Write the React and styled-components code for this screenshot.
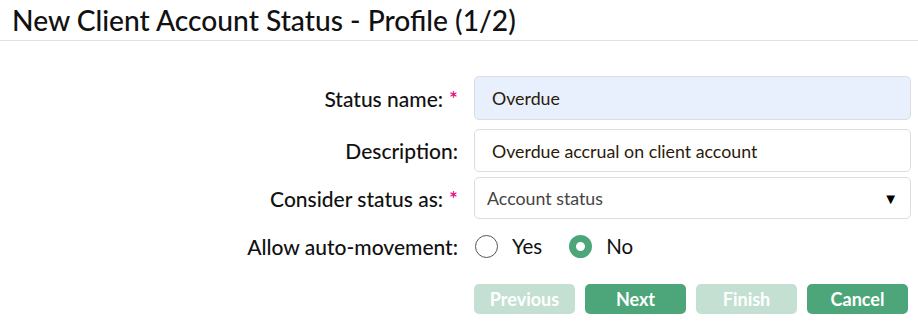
import React from 'react'
import styled, { createGlobalStyle } from 'styled-components'

const Global = createGlobalStyle`
  body {
    margin: 0;
    background: #fff;
    font-family: Lato, "Noto Sans", sans-serif;
  }
`
const Page = styled.div`
  width: 918px;
`
const Title = styled.h1`
  margin: 0;
  padding: 3px 12px 0;
  height: 37px;
  font-weight: 500;
  font-size: 28.2px;
  line-height: 34px;
  color: #111;
  border-bottom: 1px solid #e2e2e2;
`
const Form = styled.div`
  display: flex;
  flex-direction: column;
  padding-top: 35px;
`
const Row = styled.div`
  display: grid;
  grid-template-columns: 458px 437px;
  column-gap: 16px;
  align-items: center;
  margin-top: ${p => p.mt || 0}px;
`
const Label = styled.label`
  text-align: right;
  font-size: 21px;
  font-weight: 500;
  color: #111;
`
const Star = styled.span`
  color: #e6007e;
  margin-left: 6px;
`
const Input = styled.div`
  box-sizing: border-box;
  height: ${p => p.h || 42}px;
  border: 1px solid #ddd;
  border-radius: 5px;
  background: ${p => (p.filled ? '#e8f0fe' : '#fff')};
  padding: 0 ${p => (p.select ? 12 : 17)}px;
  display: flex;
  align-items: center;
  justify-content: space-between;
  font-size: 17.8px;
  color: ${p => (p.select ? '#444' : '#2a1a0a')};
`
const Arrow = styled.span`
  font-size: 15px;
  color: #000;
`
const Radios = styled.div`
  display: flex;
  align-items: center;
  height: 42px;
  gap: 14px;
  font-size: 20.5px;
  color: #111;
`
const Radio = styled.span`
  box-sizing: border-box;
  width: 23px;
  height: 23px;
  border-radius: 50%;
  border: ${p => (p.on ? '7px solid #4ca67a' : '1px solid #555')};
  background: #fff;
  margin-left: ${p => (p.first ? 1 : 13)}px;
`
const Buttons = styled.div`
  grid-column: 2;
  display: flex;
  gap: 10px;
`
const Button = styled.button`
  width: 101px;
  height: 30px;
  border: none;
  border-radius: 5px;
  background: ${p => (p.disabled ? '#c3e0d2' : '#4ca67a')};
  color: #fff;
  font-family: inherit;
  font-weight: 700;
  font-size: 18px;
  padding: 0;
`

const App = () => {
  return (
    <Page>
      <Global />
      <Title>New Client Account Status - Profile (1/2)</Title>
      <Form>
        <Row>
          <Label>Status name:<Star>*</Star></Label>
          <Input filled h={44}>Overdue</Input>
        </Row>
        <Row mt={9}>
          <Label>Description:</Label>
          <Input h={43}>Overdue accrual on client account</Input>
        </Row>
        <Row mt={5}>
          <Label>Consider status as:<Star>*</Star></Label>
          <Input select h={42}>Account status<Arrow>▼</Arrow></Input>
        </Row>
        <Row mt={6}>
          <Label>Allow auto-movement:</Label>
          <Radios>
            <Radio first />Yes
            <Radio on />No
          </Radios>
        </Row>
        <Row mt={17}>
          <Buttons>
            <Button disabled>Previous</Button>
            <Button>Next</Button>
            <Button disabled>Finish</Button>
            <Button>Cancel</Button>
          </Buttons>
        </Row>
      </Form>
    </Page>
  )
}

export default App
